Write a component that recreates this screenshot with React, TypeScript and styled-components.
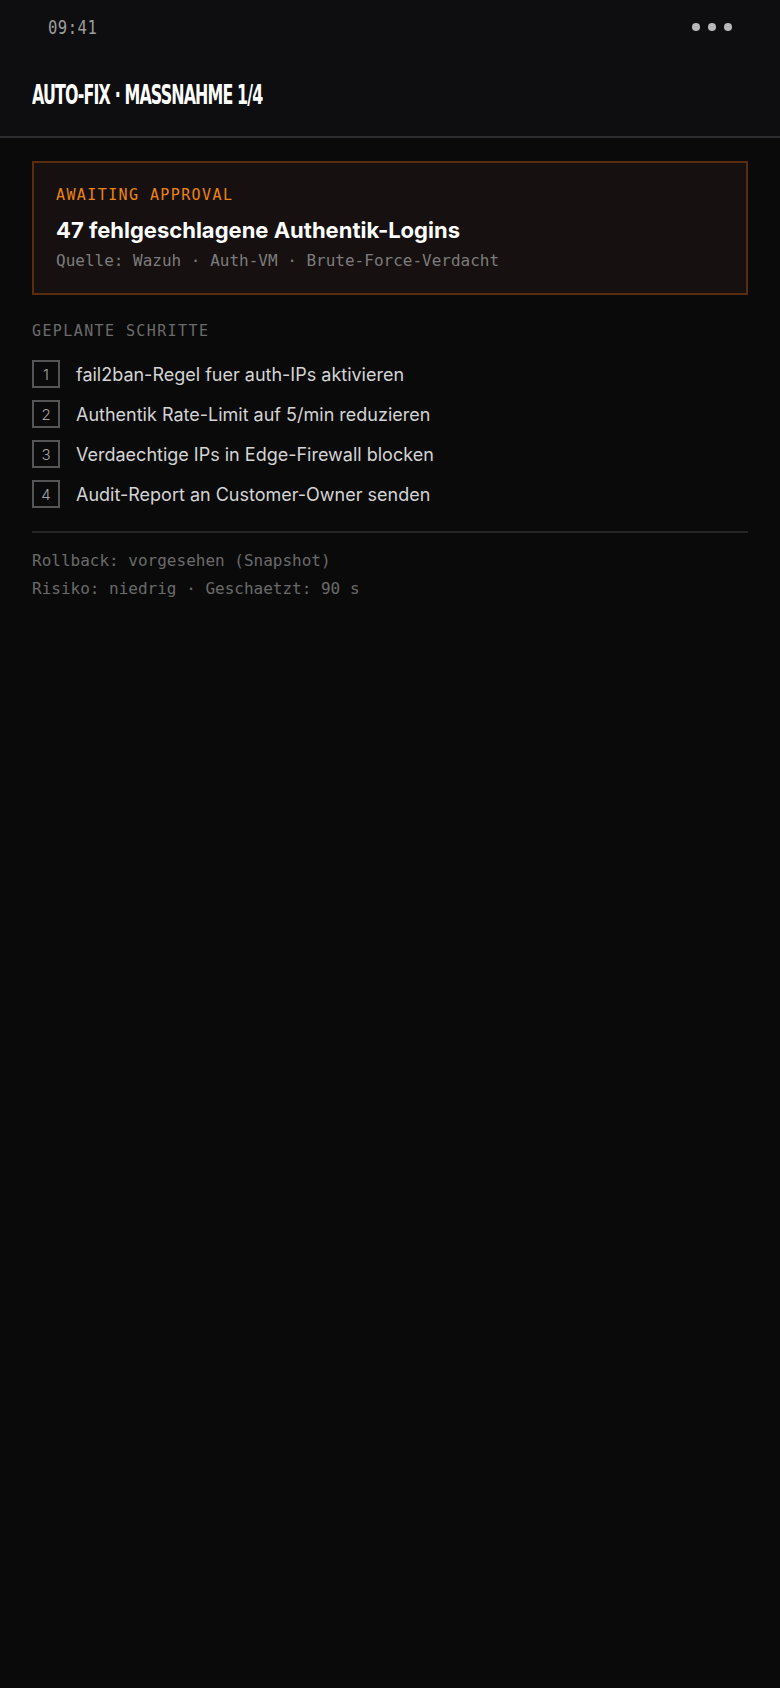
import React from 'react';
import styled, { createGlobalStyle } from 'styled-components';

const GlobalStyle = createGlobalStyle`
    html, body {
        margin: 0;
        padding: 0;
        background: #0a0a0b;
    }
    body {
        font-family: Inter, "Noto Sans", sans-serif;
        color: #d0d0d0;
        min-height: 1688px;
    }
`;

const mono = `"DejaVu Sans Mono", "Liberation Mono", monospace`;

const Screen = styled.div`
    width: 780px;
    min-height: 1688px;
    background: #0a0a0b;
`;

const Top = styled.header`
    background: #0e0e10;
    border-bottom: 2px solid #2c2c2e;
`;

const StatusBar = styled.div`
    height: 54px;
    padding: 0 48px;
    display: flex;
    align-items: center;
    justify-content: space-between;
`;

// narrow, tall digits for the clock
const Clock = styled.span`
    display: inline-block;
    font-family: "DejaVu Sans Mono", monospace;
    font-size: 19px;
    letter-spacing: 0.6px;
    color: #9c9c9c;
    transform: scaleX(0.82);
    transform-origin: left center;
`;

const Dots = styled.div`
    display: flex;
    gap: 8px;
`;

const Dot = styled.span`
    width: 8px;
    height: 8px;
    border-radius: 50%;
    background: #b8b8b8;
`;

const TitleBar = styled.div`
    height: 82px;
    padding: 0 32px;
    display: flex;
    align-items: center;
`;

const Title = styled.h1`
    margin: 0;
    display: inline-block;
    white-space: nowrap;
    font-family: "DejaVu Sans", sans-serif;
    font-weight: 700;
    font-size: 26px;
    letter-spacing: -1.4px;
    color: #ffffff;
    transform: scaleX(0.61);
    transform-origin: left center;
`;

const Main = styled.main`
    padding: 23px 32px;
`;

const AlertCard = styled.section`
    border: 2px solid #5a2c0d;
    background: #171010;
    padding: 20px 22px;
`;

const Eyebrow = styled.div<{ $tone?: 'accent' | 'muted' }>`
    font-family: ${mono};
    font-size: 15px;
    line-height: 24px;
    letter-spacing: 1.4px;
    color: ${p => (p.$tone === 'accent' ? '#ec8510' : '#6c6c6c')};
`;

const AlertTitle = styled.h2`
    margin: 8px 0 4px;
    font-size: 22px;
    line-height: 30px;
    font-weight: 700;
    color: #ffffff;
`;

const MetaLine = styled.div<{ $lineHeight?: number }>`
    font-family: ${mono};
    font-size: 16px;
    line-height: ${p => p.$lineHeight ?? 24}px;
    color: ${p => (p.$lineHeight ? '#6a6a6a' : '#7c7c7c')};
`;

const Section = styled.section`
    margin-top: 24px;
`;

const StepList = styled.ol`
    list-style: none;
    margin: 17px 0 0;
    padding: 0;
    display: flex;
    flex-direction: column;
    gap: 12px;
`;

const Step = styled.li`
    display: flex;
    align-items: center;
    gap: 16px;
    height: 28px;
`;

const StepNumber = styled.span`
    box-sizing: border-box;
    width: 28px;
    height: 28px;
    border: 2px solid #555557;
    display: flex;
    align-items: center;
    justify-content: center;
    font-size: 15px;
    font-weight: 300;
    color: #a4a4a4;
`;

const StepText = styled.span`
    font-size: 18px;
    color: #d4d4d4;
`;

const Divider = styled.hr`
    margin: 23px 0 14px;
    border: none;
    height: 2px;
    background: #262628;
`;

const steps = [
    'fail2ban-Regel fuer auth-IPs aktivieren',
    'Authentik Rate-Limit auf 5/min reduzieren',
    'Verdaechtige IPs in Edge-Firewall blocken',
    'Audit-Report an Customer-Owner senden',
];

const App = () => (
    <>
        <GlobalStyle />
        <Screen>
            <Top>
                <StatusBar>
                    <Clock>09:41</Clock>
                    <Dots>
                        <Dot />
                        <Dot />
                        <Dot />
                    </Dots>
                </StatusBar>
                <TitleBar>
                    <Title>AUTO-FIX · MASSNAHME 1/4</Title>
                </TitleBar>
            </Top>

            <Main>
                <AlertCard>
                    <Eyebrow $tone="accent">AWAITING APPROVAL</Eyebrow>
                    <AlertTitle>47 fehlgeschlagene Authentik-Logins</AlertTitle>
                    <MetaLine>Quelle: Wazuh · Auth-VM · Brute-Force-Verdacht</MetaLine>
                </AlertCard>

                <Section>
                    <Eyebrow>GEPLANTE SCHRITTE</Eyebrow>
                    <StepList>
                        {steps.map((s, i) => (
                            <Step key={s}>
                                <StepNumber>{i + 1}</StepNumber>
                                <StepText>{s}</StepText>
                            </Step>
                        ))}
                    </StepList>
                </Section>

                <Divider />
                <MetaLine $lineHeight={28}>Rollback: vorgesehen (Snapshot)</MetaLine>
                <MetaLine $lineHeight={28}>Risiko: niedrig · Geschaetzt: 90 s</MetaLine>
            </Main>
        </Screen>
    </>
);

export default App;
